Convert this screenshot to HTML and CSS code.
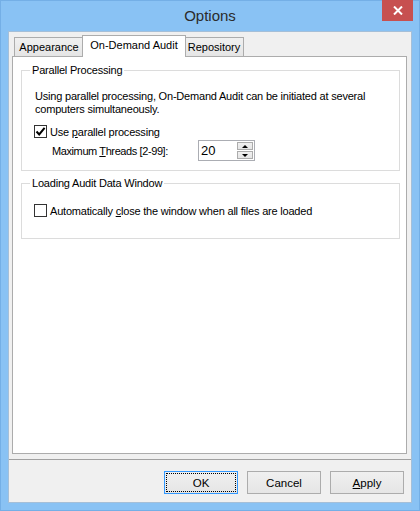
FILE: index.html
```html
<!DOCTYPE html>
<html lang="en">
<head>
  <meta charset="UTF-8" />
  <title>Options</title>
  <link rel="stylesheet" href="styles.css">
</head>
<body>
  <div class="window">
    <div class="titlebar">
      <span class="title">Options</span>
      <button class="close" title="Close">
        <svg width="10" height="9" viewBox="0 0 10 9">
          <path d="M1 0.5 L9 8.5 M9 0.5 L1 8.5" stroke="#fff" stroke-width="2" fill="none" />
        </svg>
      </button>
    </div>

    <div class="client">
      <div class="sheet">
        <div class="tabs">
          <div class="tab tab-appearance">Appearance</div>
          <div class="tab tab-audit active">On-Demand Audit</div>
          <div class="tab tab-repo">Repository</div>
        </div>

        <div class="panel">
          <fieldset class="group group-parallel">
            <legend>Parallel Processing</legend>
            <p class="desc">Using parallel processing, On-Demand Audit can be initiated at several<br>computers simultaneously.</p>
            <label class="check">
              <span class="box">
                <svg width="11" height="11" viewBox="0 0 11 11">
                  <path d="M1.5 5.5 L4.2 8.4 L9.6 1.8" stroke="#000" stroke-width="2" fill="none" />
                </svg>
              </span>
              <span>Use <u>p</u>arallel processing</span>
            </label>
            <div class="threads">
              <span class="threads-label">Maximum <u>T</u>hreads [2-99]:</span>
              <div class="spin">
                <span class="spin-value">20</span>
                <div class="spin-arrows">
                  <span class="arrow up"></span>
                  <span class="arrow down"></span>
                </div>
              </div>
            </div>
          </fieldset>

          <fieldset class="group group-loading">
            <legend>Loading Audit Data Window</legend>
            <label class="check">
              <span class="box"></span>
              <span>Automatically <u>c</u>lose the window when all files are loaded</span>
            </label>
          </fieldset>
        </div>
      </div>

      <div class="footer">
        <button class="btn focused">OK</button>
        <button class="btn">Cancel</button>
        <button class="btn"><u>A</u>pply</button>
      </div>
    </div>
  </div>
</body>
</html>
```

FILE: styles.css
```css
* {
  box-sizing: border-box;
}

body {
  margin: 0;
  background: #ffffff;
  font-family: "Liberation Sans", Arial, sans-serif;
  font-size: 11px;
  letter-spacing: -0.2px;
  color: #000;
}

.window {
  position: relative;
  width: 420px;
  height: 511px;
  background: #89c2f4;
  border: 1px solid #74afe6;
}

.titlebar {
  height: 30px;
  display: flex;
  align-items: center;
  justify-content: center;
}

.title {
  font-size: 15px;
  letter-spacing: 0;
  color: #2b2b2b;
  margin-top: -1px;
}

.close {
  position: absolute;
  top: -1px;
  right: 6px;
  width: 31px;
  height: 21px;
  border: none;
  padding: 0;
  background: #c75050;
  display: flex;
  align-items: center;
  justify-content: center;
}

.client {
  margin-left: 7px;
  width: 404px;
  height: 472px;
  background: #f0f0f0;
  border: 1px solid #a5bfd8;
  display: flex;
  flex-direction: column;
}

.sheet {
  padding: 3px 4px 0 3px;
}

/* tab strip */
.tabs {
  display: flex;
  align-items: flex-end;
  height: 21px;
  padding-left: 2px;
}

.tab {
  height: 19px;
  border: 1px solid #acacac;
  border-bottom: none;
  background: linear-gradient(#f0f0f0, #e5e5e5);
  text-align: center;
  line-height: 18px;
  white-space: nowrap;
  letter-spacing: 0;
}

.tab-appearance {
  width: 70px;
}

.tab-repo {
  width: 60px;
}

.tab.active {
  position: relative;
  z-index: 1;
  width: 104px;
  height: 22px;
  margin: 0 -2px -1px -2px;
  background: #fff;
  line-height: 19px;
}

.panel {
  height: 398px;
  background: #fff;
  border: 1px solid #acacac;
  padding: 0 6px 0 8px;
}

/* group boxes */
.group {
  margin: 6px 0 0 0;
  padding: 0 0 9px 13px;
  border: 1px solid #dcdcdc;
  min-width: 0;
}

.group legend {
  margin-left: -5px;
  padding: 0 2px;
  line-height: 14px;
}

.group-loading {
  margin-top: 5px;
  padding-bottom: 21px;
}

.desc {
  margin: 13px 0 0 0;
  line-height: 13px;
}

.check {
  display: flex;
  align-items: center;
  height: 13px;
  margin-top: 9px;
  gap: 3px;
}

.group-loading .check {
  margin-top: 14px;
}

.box {
  width: 13px;
  height: 13px;
  margin-left: -1px;
  border: 1px solid #333;
  background: #fff;
  display: flex;
  align-items: center;
  justify-content: center;
}

.threads {
  display: flex;
  align-items: center;
  margin-top: 2px;
  padding-left: 17px;
}

.threads-label {
  width: 146px;
  letter-spacing: -0.4px;
}

.spin {
  width: 57px;
  height: 21px;
  border: 1px solid #abadb3;
  display: flex;
  align-items: center;
  justify-content: space-between;
  padding: 0 1px 0 2px;
}

.spin-value {
  font-size: 13px;
  letter-spacing: 0;
}

.spin-arrows {
  display: flex;
  flex-direction: column;
  gap: 1px;
}

.arrow {
  position: relative;
  width: 16px;
  height: 8px;
  border: 1px solid #acacac;
  background: linear-gradient(#f0f0f0, #e5e5e5);
  display: flex;
  align-items: center;
  justify-content: center;
}

.arrow::after {
  content: "";
  border-left: 3px solid transparent;
  border-right: 3px solid transparent;
}

.arrow.up::after {
  border-bottom: 3px solid #000;
}

.arrow.down::after {
  border-top: 3px solid #000;
}

/* bottom buttons */
.footer {
  flex: 1;
  margin-top: 5px;
  border-top: 1px solid #a0a0a0;
  display: flex;
  justify-content: flex-end;
  align-items: flex-start;
  gap: 9px;
  padding: 11px 7px 0 0;
}

.btn {
  width: 74px;
  height: 23px;
  border: 1px solid #acacac;
  background: linear-gradient(#f0f0f0, #e5e5e5);
  font-family: "Liberation Sans", Arial, sans-serif;
  font-size: 11.5px;
  color: #000;
  padding: 0;
}

.btn.focused {
  border-color: #3399ff;
  outline: 1px dotted #000;
  outline-offset: -3px;
}
```
